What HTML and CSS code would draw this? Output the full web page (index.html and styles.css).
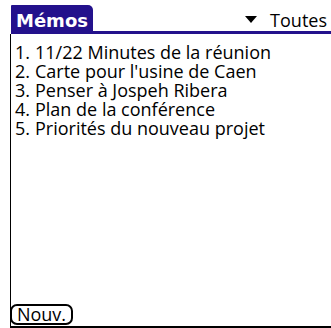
FILE: index.html
```html
<!DOCTYPE html>
<html>
<head>
<meta charset="utf-8">
<link rel="stylesheet" href="styles.css">
</head>
<body>
<div class="screen">
  <header class="titlebar">
    <div class="tab">Mémos</div>
    <div class="category"><span class="tri"></span>Toutes</div>
  </header>
  <main class="content">
    <ol class="memos">
      <li><span class="num">1.</span>11/22 Minutes de la réunion</li>
      <li><span class="num">2.</span>Carte pour l'usine de Caen</li>
      <li><span class="num">3.</span>Penser à Jospeh Ribera</li>
      <li><span class="num">4.</span>Plan de la conférence</li>
      <li><span class="num">5.</span>Priorités du nouveau projet</li>
    </ol>
    <div class="footer">
      <button class="btn">Nouv.</button>
    </div>
  </main>
</div>
</body>
</html>
```
FILE: styles.css
```css
html, body {
  margin: 0;
  padding: 0;
  background: #fff;
}
.screen {
  width: 331px;
  height: 328px;
  display: flex;
  flex-direction: column;
  font-family: "Open Sans", "DejaVu Sans", sans-serif;
  color: #000;
}
.titlebar {
  display: flex;
  align-items: flex-end;
  justify-content: space-between;
  margin-top: 5px;
  margin-left: 11px;
  height: 29px;
  border-bottom: 3px solid #23118c;
  box-sizing: border-box;
}
.tab {
  background: #23118c;
  color: #fff;
  font-family: "DejaVu Sans", sans-serif;
  font-weight: bold;
  font-size: 18px;
  line-height: 20px;
  height: 26px;
  width: 82px;
  box-sizing: border-box;
  padding: 6px 0 0 5px;
  border-radius: 1px 5px 0 0;
}
.category {
  display: flex;
  align-items: flex-start;
  font-size: 18px;
  line-height: 22px;
  height: 26px;
  box-sizing: border-box;
  padding: 4px 4px 0 0;
}
.tri {
  width: 0;
  height: 0;
  border-left: 6px solid transparent;
  border-right: 6px solid transparent;
  border-top: 7px solid #000;
  margin: 7px 13px 0 0;
}
.content {
  flex: 1;
  margin-left: 10px;
  border-left: 1px solid #000;
  border-bottom: 2px solid #000;
  display: flex;
  flex-direction: column;
}
.memos {
  list-style: none;
  margin: 9px 0 0 0;
  padding: 0 0 0 4px;
  flex: 1;
  font-size: 18px;
  line-height: 19px;
}
.num {
  display: inline-block;
  width: 20px;
}
.footer {
  padding-bottom: 1px;
}
.btn {
  font-family: inherit;
  font-size: 18px;
  background: #fff;
  color: #000;
  border: 2px solid #000;
  border-radius: 7px;
  height: 21px;
  width: 63px;
  padding: 0;
  margin-left: -1px;
  line-height: 17px;
  display: block;
}
```
